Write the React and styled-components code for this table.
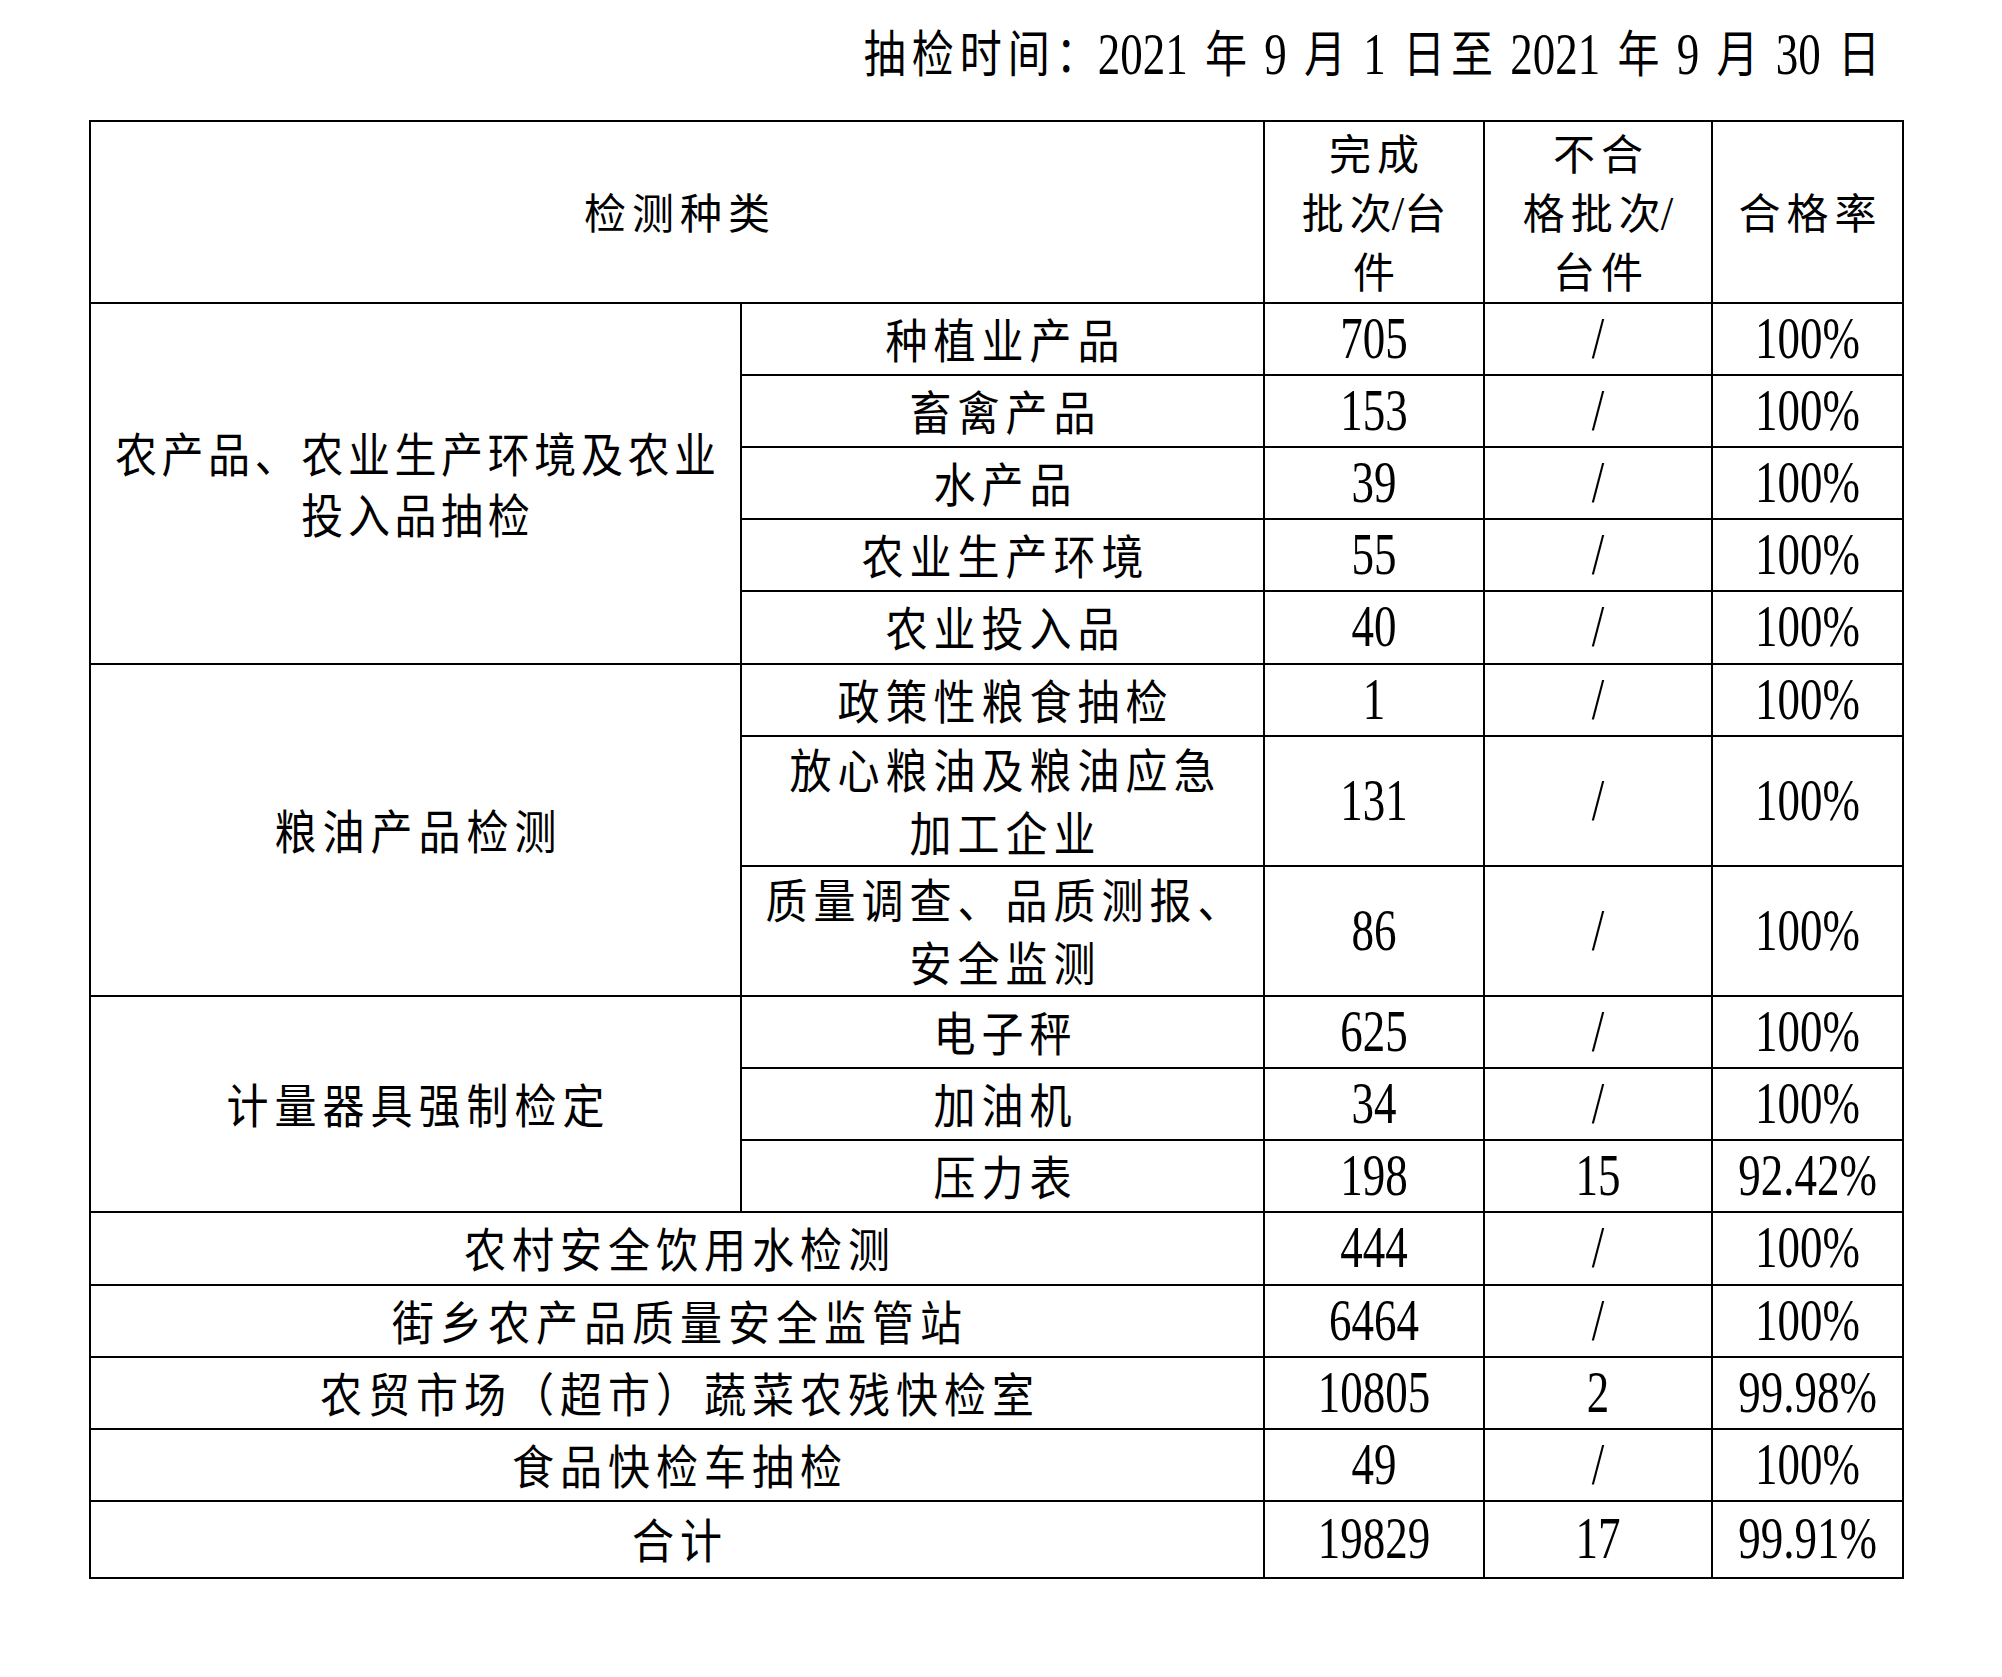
import React from 'react';
import styled, { createGlobalStyle } from 'styled-components';

const GlobalStyle = createGlobalStyle`
  html, body {
    margin: 0;
    padding: 0;
    background: #fff;
  }
  body {
    color: #000;
    font-family: "Liberation Serif", "Noto Sans CJK SC", serif;
  }
`;

// 汉字和全角标点一段，数字和字母一段
const CJK_SPLIT = /([\u3000-\u303f\u4e00-\u9fff\uff00-\uffef]+)/;

const renderLine = (line, key) =>
  line.split(CJK_SPLIT).map((part, i) => {
    if (!part) return null;
    if (i % 2 === 1) return <Cjk key={`${key}-${i}`}>{part}</Cjk>;
    return part.split(/(\s+)/).map((w, j) =>
      !w ? null : /\s/.test(w) ? ' ' : <Num key={`${key}-${i}-${j}`}>{w}</Num>
    );
  });

const renderText = (text) =>
  text.split('\n').map((line, i) => (
    <React.Fragment key={i}>
      {i > 0 && <br />}
      {renderLine(line, i)}
    </React.Fragment>
  ));

const groups = [
  {
    label: '农产品、农业生产环境及农业\n投入品抽检',
    tight: true,
    items: [
      { name: '种植业产品', done: '705', fail: '/', rate: '100%', h: 72 },
      { name: '畜禽产品', done: '153', fail: '/', rate: '100%', h: 72 },
      { name: '水产品', done: '39', fail: '/', rate: '100%', h: 72 },
      { name: '农业生产环境', done: '55', fail: '/', rate: '100%', h: 72 },
      { name: '农业投入品', done: '40', fail: '/', rate: '100%', h: 73 },
    ],
  },
  {
    label: '粮油产品检测',
    items: [
      { name: '政策性粮食抽检', done: '1', fail: '/', rate: '100%', h: 72 },
      { name: '放心粮油及粮油应急\n加工企业', done: '131', fail: '/', rate: '100%', h: 130 },
      { name: '质量调查、品质测报、\n安全监测', done: '86', fail: '/', rate: '100%', h: 130 },
    ],
  },
  {
    label: '计量器具强制检定',
    items: [
      { name: '电子秤', done: '625', fail: '/', rate: '100%', h: 72 },
      { name: '加油机', done: '34', fail: '/', rate: '100%', h: 72 },
      { name: '压力表', done: '198', fail: '15', rate: '92.42%', h: 72 },
    ],
  },
];

const singles = [
  { name: '农村安全饮用水检测', done: '444', fail: '/', rate: '100%', h: 73 },
  { name: '街乡农产品质量安全监管站', done: '6464', fail: '/', rate: '100%', h: 72 },
  { name: '农贸市场（超市）蔬菜农残快检室', done: '10805', fail: '2', rate: '99.98%', h: 72 },
  { name: '食品快检车抽检', done: '49', fail: '/', rate: '100%', h: 72 },
];

const total = { name: '合计', done: '19829', fail: '17', rate: '99.91%', h: 77 };

const App = () => {
  return (
    <Page>
      <GlobalStyle />
      <Title>{renderText('抽检时间：2021 年 9 月 1 日至 2021 年 9 月 30 日')}</Title>

      <Table>
        <colgroup>
          <col style={{ width: 651 }} />
          <col style={{ width: 523 }} />
          <col style={{ width: 220 }} />
          <col style={{ width: 228 }} />
          <col style={{ width: 191 }} />
        </colgroup>
        <tbody>
          <Row $h={182}>
            <HeadCell colSpan={2}>{renderText('检测种类')}</HeadCell>
            <HeadCell>{renderText('完成\n批次/台\n件')}</HeadCell>
            <HeadCell>{renderText('不合\n格批次/\n台件')}</HeadCell>
            <HeadCell>{renderText('合格率')}</HeadCell>
          </Row>

          {groups.map((group) =>
            group.items.map((item, i) => (
              <Row key={item.name} $h={item.h}>
                {i === 0 && (
                  <GroupCell rowSpan={group.items.length} $tight={group.tight}>
                    {renderText(group.label)}
                  </GroupCell>
                )}
                <Cell>{renderText(item.name)}</Cell>
                <Cell>{renderText(item.done)}</Cell>
                <Cell>{renderText(item.fail)}</Cell>
                <Cell>{renderText(item.rate)}</Cell>
              </Row>
            ))
          )}

          {[...singles, total].map((item) => (
            <Row key={item.name} $h={item.h}>
              <Cell colSpan={2}>{renderText(item.name)}</Cell>
              <Cell>{renderText(item.done)}</Cell>
              <Cell>{renderText(item.fail)}</Cell>
              <Cell>{renderText(item.rate)}</Cell>
            </Row>
          ))}
        </tbody>
      </Table>
    </Page>
  );
};

export default App;


const Page = styled.div`
  width: 2002px;
  min-height: 1677px;
  box-sizing: border-box;
  padding: 22px 0 0 89px;
`;

const Title = styled.div`
  --sy: 1.18;
  width: 1815px;
  box-sizing: border-box;
  padding-right: 24px;
  margin-bottom: 37px;
  text-align: right;
  font-size: 45px;
  line-height: 58px;
  word-spacing: 6px;
  white-space: nowrap;
`;

const Cjk = styled.span`
  display: inline-block;
  font-family: "Noto Sans CJK SC", sans-serif;
  font-size: 42px;
  letter-spacing: var(--ls, 6px);
  margin-right: calc(-1 * var(--ls, 6px));
  transform: scaleY(var(--sy, 1.1));
`;

const Num = styled.span`
  display: inline-block;
  font-family: "Liberation Serif", serif;
  font-size: 45px;
  letter-spacing: 0;
  transform: scaleY(var(--ny, 1.3));
`;

const Table = styled.table`
  width: 1815px;
  table-layout: fixed;
  border-collapse: collapse;
  font-size: 45px;
`;

const Row = styled.tr`
  height: ${(p) => p.$h}px;
`;

const Cell = styled.td`
  border: 2px solid #000;
  padding: 0;
  text-align: center;
  vertical-align: middle;
  line-height: 59px;
  white-space: nowrap;
`;

const HeadCell = styled(Cell)`
  --sy: 1;
  --ny: 1.1;
  line-height: 55px;
`;

const GroupCell = styled(Cell)`
  --ls: ${(p) => (p.$tight ? '4.6px' : '6px')};
  line-height: 57px;
`;
